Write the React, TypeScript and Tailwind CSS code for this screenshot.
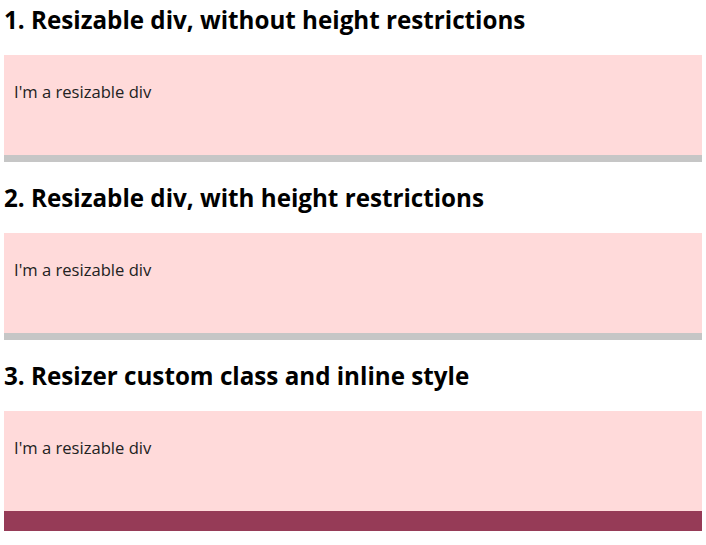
const SECTIONS = [
  { title: '1. Resizable div, without height restrictions', bar: 'h-[7px] bg-[#c6c6c6]' },
  { title: '2. Resizable div, with height restrictions', bar: 'h-[7px] bg-[#c6c6c6]' },
  { title: '3. Resizer custom class and inline style', bar: 'h-[20px] bg-[#963b57]' },
]

export default function App() {
  return (
    <div className="min-h-screen bg-white px-1 pt-[4px] font-['Open_Sans',sans-serif]">
      {SECTIONS.map((s) => (
        <section key={s.title} className="mb-[20px]">
          <h2 className="mb-[19px] text-[24.2px] leading-[32px] font-bold text-black">
            {s.title}
          </h2>
          {/* resizable box + resizer handle */}
          <div className="h-[100px] bg-[#ffdada] px-[10px] pt-[25px] text-[16.6px] leading-[24px] text-[#222]">
            I'm a resizable div
          </div>
          <div className={s.bar} />
        </section>
      ))}
    </div>
  )
}
